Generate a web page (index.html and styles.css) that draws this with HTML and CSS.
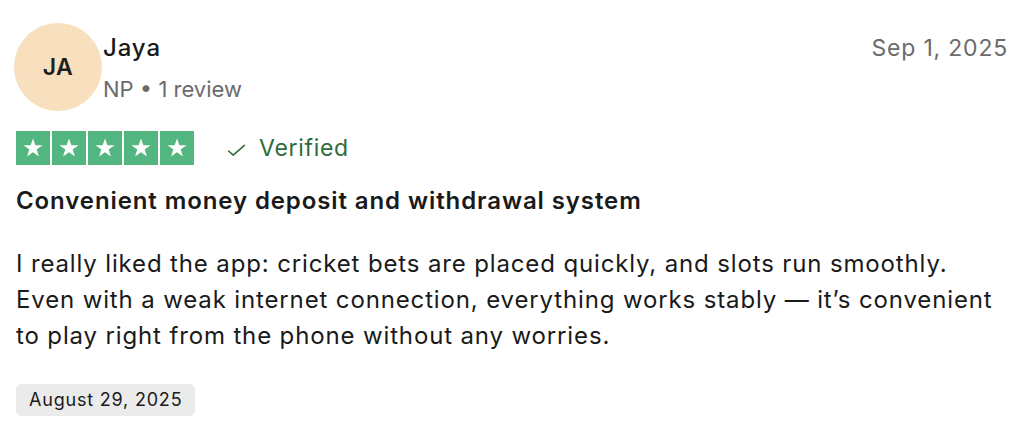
FILE: index.html
```html
<!DOCTYPE html>
<html>
<head>
<meta charset="utf-8">
<link rel="stylesheet" href="styles.css">
</head>
<body>
<article class="review">
  <header class="head">
    <div class="avatar">JA</div>
    <div class="who">
      <div class="name">Jaya</div>
      <div class="meta">NP • 1 review</div>
    </div>
    <div class="date">Sep 1, 2025</div>
  </header>
  <div class="rating">
    <div class="stars">
      <span class="star"><svg viewBox="0 0 24 24"><path d="M12 3.2l2.2 6.3h6.6l-5.4 3.9 2.1 6.4L12 15.9l-5.5 3.9 2.1-6.4-5.4-3.9h6.6z" fill="#fff"/></svg></span>
      <span class="star"><svg viewBox="0 0 24 24"><path d="M12 3.2l2.2 6.3h6.6l-5.4 3.9 2.1 6.4L12 15.9l-5.5 3.9 2.1-6.4-5.4-3.9h6.6z" fill="#fff"/></svg></span>
      <span class="star"><svg viewBox="0 0 24 24"><path d="M12 3.2l2.2 6.3h6.6l-5.4 3.9 2.1 6.4L12 15.9l-5.5 3.9 2.1-6.4-5.4-3.9h6.6z" fill="#fff"/></svg></span>
      <span class="star"><svg viewBox="0 0 24 24"><path d="M12 3.2l2.2 6.3h6.6l-5.4 3.9 2.1 6.4L12 15.9l-5.5 3.9 2.1-6.4-5.4-3.9h6.6z" fill="#fff"/></svg></span>
      <span class="star"><svg viewBox="0 0 24 24"><path d="M12 3.2l2.2 6.3h6.6l-5.4 3.9 2.1 6.4L12 15.9l-5.5 3.9 2.1-6.4-5.4-3.9h6.6z" fill="#fff"/></svg></span>
    </div>
    <div class="verified">
      <svg class="check" viewBox="0 0 20 14"><path d="M1.5 7.5l5 4.5L18.5 1.5" fill="none" stroke="#2f6b3a" stroke-width="1.6" stroke-linecap="round" stroke-linejoin="round"/></svg>
      <span>Verified</span>
    </div>
  </div>
  <h2 class="title">Convenient money deposit and withdrawal system</h2>
  <p class="body">I really liked the app: cricket bets are placed quickly, and slots run smoothly.<br>Even with a weak internet connection, everything works stably — it’s convenient<br>to play right from the phone without any worries.</p>
  <div class="badge">August 29, 2025</div>
</article>
</body>
</html>
```
FILE: styles.css
```css
html, body {
  margin: 0;
  background: #fff;
}
body {
  font-family: Inter, "Noto Sans", sans-serif;
  color: #1a1a1a;
}
.review {
  padding: 23px 16px 0 16px;
  width: 992px;
}
.head {
  display: flex;
  align-items: flex-start;
}
.avatar {
  width: 88px;
  height: 88px;
  margin-left: -2px;
  border-radius: 50%;
  background: #f8e0bf;
  display: flex;
  align-items: center;
  justify-content: center;
  font-size: 23px;
  font-weight: 600;
  letter-spacing: 0.5px;
  color: #1f1f1f;
  flex-shrink: 0;
}
.who {
  margin-left: 1px;
  padding-top: 9px;
  flex: 1;
}
.name {
  font-size: 24px;
  font-weight: 500;
  letter-spacing: 0.9px;
  line-height: 32px;
  color: #1a1a1a;
}
.meta {
  font-size: 22px;
  line-height: 30px;
  margin-top: 10px;
  color: #6b6b6b;
}
.date {
  padding-top: 9px;
  font-size: 23px;
  letter-spacing: 0.8px;
  line-height: 32px;
  color: #6b6b6b;
}
.rating {
  display: flex;
  align-items: center;
  margin-top: 20px;
}
.stars {
  display: flex;
  gap: 2px;
}
.star {
  width: 34px;
  height: 34px;
  background: #53b57f;
  display: flex;
  align-items: center;
  justify-content: center;
}
.star svg {
  width: 26px;
  height: 26px;
}
.verified {
  display: flex;
  align-items: center;
  margin-left: 33px;
  color: #2f6b3a;
  font-size: 23px;
  letter-spacing: 0.7px;
}
.check {
  width: 19px;
  height: 13px;
  margin-right: 13px;
  margin-top: 4px;
}
.title {
  margin: 20px 0 0 0;
  font-size: 24px;
  font-weight: 600;
  letter-spacing: 0.9px;
  line-height: 32px;
  color: #1a1a1a;
}
.body {
  margin: 29px 0 0 0;
  font-size: 24px;
  letter-spacing: 0.86px;
  line-height: 36px;
  color: #1a1a1a;
}
.badge {
  display: inline-block;
  margin-top: 30px;
  padding: 0 13px;
  height: 32px;
  line-height: 32px;
  background: #ebebeb;
  border-radius: 6px;
  font-size: 18px;
  letter-spacing: 0.8px;
  color: #1a1a1a;
}
```
